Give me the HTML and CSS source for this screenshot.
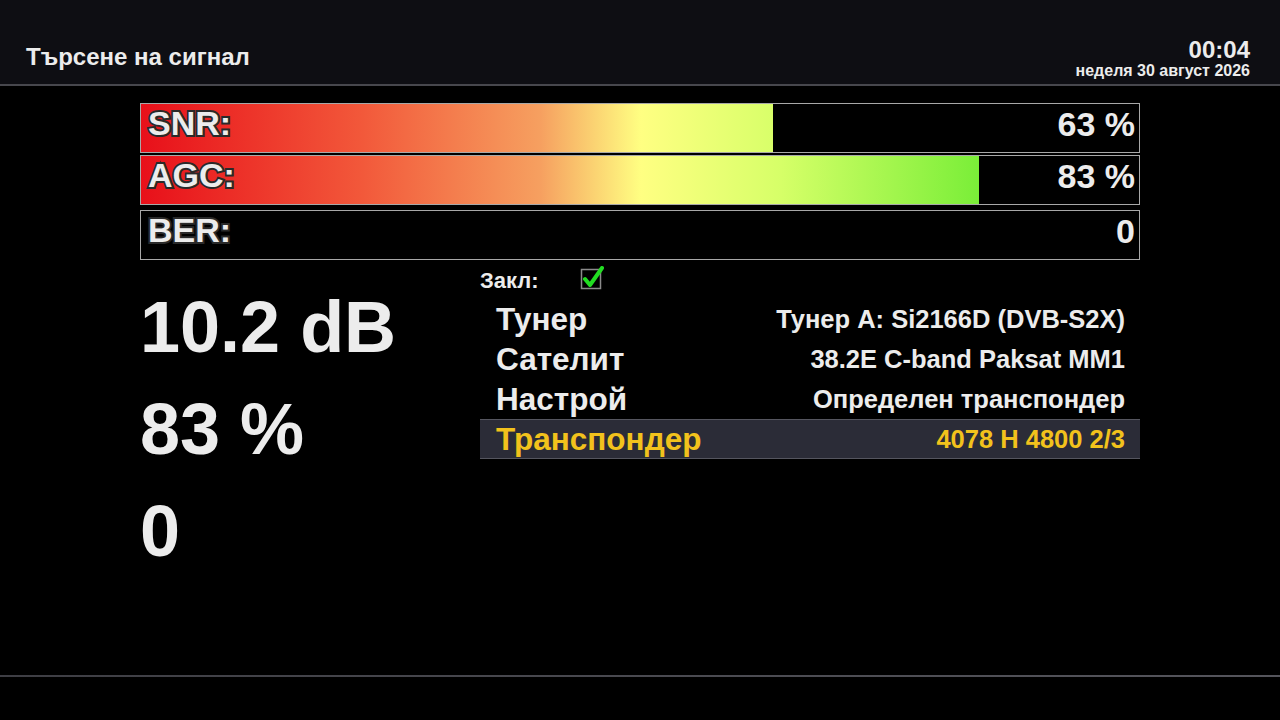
FILE: index.html
```html
<!DOCTYPE html>
<html lang="bg">
<head>
<meta charset="utf-8">
<title>Търсене на сигнал</title>
<link rel="stylesheet" href="styles.css">
</head>
<body>
<div class="screen">
  <header class="header">
    <div class="title">Търсене на сигнал</div>
    <div class="clock">
      <div class="time">00:04</div>
      <div class="date">неделя 30 август 2026</div>
    </div>
  </header>
  <div class="rule"></div>
  <main class="main">
    <div class="bars">
      <div class="bar bar-snr">
        <div class="fill" style="width: 63.3%"></div>
        <span class="label">SNR:</span>
        <span class="value">63 %</span>
      </div>
      <div class="bar bar-agc">
        <div class="fill" style="width: 84%"></div>
        <span class="label">AGC:</span>
        <span class="value">83 %</span>
      </div>
      <div class="bar bar-ber">
        <span class="label">BER:</span>
        <span class="value">0</span>
      </div>
    </div>
    <div class="lower">
      <div class="big">
        <div class="big-line">10.2 dB</div>
        <div class="big-line">83 %</div>
        <div class="big-line">0</div>
      </div>
      <div class="info">
        <div class="lock">
          <span class="lock-label">Закл:</span>
          <span class="check">
            <svg width="24" height="24" viewBox="0 0 24 24">
              <rect x="1.5" y="3.5" width="19" height="19" fill="none" stroke="#8a8a8a" stroke-width="1.5"/>
              <path d="M5 13 L10 19 L22 2" fill="none" stroke="#22dd22" stroke-width="4" stroke-linecap="round" stroke-linejoin="round"/>
            </svg>
          </span>
        </div>
        <div class="row"><span class="row-name">Тунер</span><span class="row-val">Тунер A: Si2166D (DVB-S2X)</span></div>
        <div class="row"><span class="row-name">Сателит</span><span class="row-val">38.2E C-band Paksat MM1</span></div>
        <div class="row"><span class="row-name">Настрой</span><span class="row-val">Определен транспондер</span></div>
        <div class="row row-sel"><span class="row-name">Транспондер</span><span class="row-val">4078 H 4800 2/3</span></div>
      </div>
    </div>
  </main>
  <div class="footer-rule"></div>
</div>
</body>
</html>
```

FILE: styles.css
```css
* { box-sizing: border-box; }
html, body {
  margin: 0;
  padding: 0;
  background: #000;
}
body {
  font-family: "Liberation Sans", Arial, sans-serif;
  color: #ececec;
}
.screen {
  width: 1280px;
  height: 720px;
  background: #000;
  display: flex;
  flex-direction: column;
  overflow: hidden;
}
.header {
  height: 84px;
  background: #0e0e13;
  display: flex;
  justify-content: space-between;
  align-items: flex-end;
  padding: 0 30px 4px 26px;
}
.title {
  font-size: 24px;
  font-weight: bold;
  color: #ececec;
  margin-bottom: 9px;
}
.clock {
  text-align: right;
  font-weight: bold;
  color: #ececec;
}
.time {
  font-size: 24px;
  line-height: 24px;
}
.date {
  font-size: 16px;
  line-height: 18px;
}
.rule {
  height: 2px;
  background: #47474d;
}
.main {
  flex: 1;
  padding: 17px 140px 0 140px;
}
.bars {
  display: flex;
  flex-direction: column;
  gap: 2px;
}
.bar {
  position: relative;
  height: 50px;
  border: 1px solid #a8a8a8;
  background: #000;
  display: flex;
  align-items: center;
  justify-content: space-between;
  padding: 0 4px 0 7px;
}
.bar-ber { margin-top: 3px; }
.fill {
  position: absolute;
  left: 0;
  top: 0;
  bottom: 0;
  background-image: linear-gradient(to right, #e8101a 0px, #f2583a 220px, #f6a060 400px, #ffff82 500px, #d6ff68 640px, #7aee38 838px);
  background-size: 998px 100%;
  background-repeat: no-repeat;
}
.label, .value {
  position: relative;
  font-size: 34px;
  font-weight: bold;
  color: #ececec;
}
.label {
  -webkit-text-stroke: 4px #2a2a2a;
  paint-order: stroke fill;
  margin-top: -9px;
}
.value {
  margin-top: -8px;
}
.lower {
  display: grid;
  grid-template-columns: 340px 660px;
}
.big {
  padding-top: 16px;
}
.big-line {
  font-size: 72px;
  font-weight: bold;
  line-height: 102px;
  color: #ececec;
}
.info {
  padding-top: 5px;
}
.lock {
  display: flex;
  align-items: center;
  height: 32px;
  margin-bottom: 2px;
}
.lock-label {
  font-size: 22px;
  font-weight: bold;
  width: 100px;
}
.check {
  display: flex;
  margin-top: -6px;
}
.row {
  height: 40px;
  display: flex;
  justify-content: space-between;
  align-items: center;
  padding: 0 15px 0 16px;
  border-top: 1px solid transparent;
  border-bottom: 1px solid transparent;
}
.row-name {
  font-size: 31.5px;
  font-weight: bold;
  color: #ececec;
}
.row-val {
  font-size: 25.5px;
  font-weight: bold;
  color: #ececec;
}
.row-sel {
  background: #2b2c37;
  border-top-color: #55565f;
  border-bottom-color: #55565f;
}
.row-sel .row-name, .row-sel .row-val {
  color: #f2c21c;
}
.footer-rule {
  height: 2px;
  background: linear-gradient(to right, #3e3e44, #55555c);
  margin-bottom: 43px;
}
```
